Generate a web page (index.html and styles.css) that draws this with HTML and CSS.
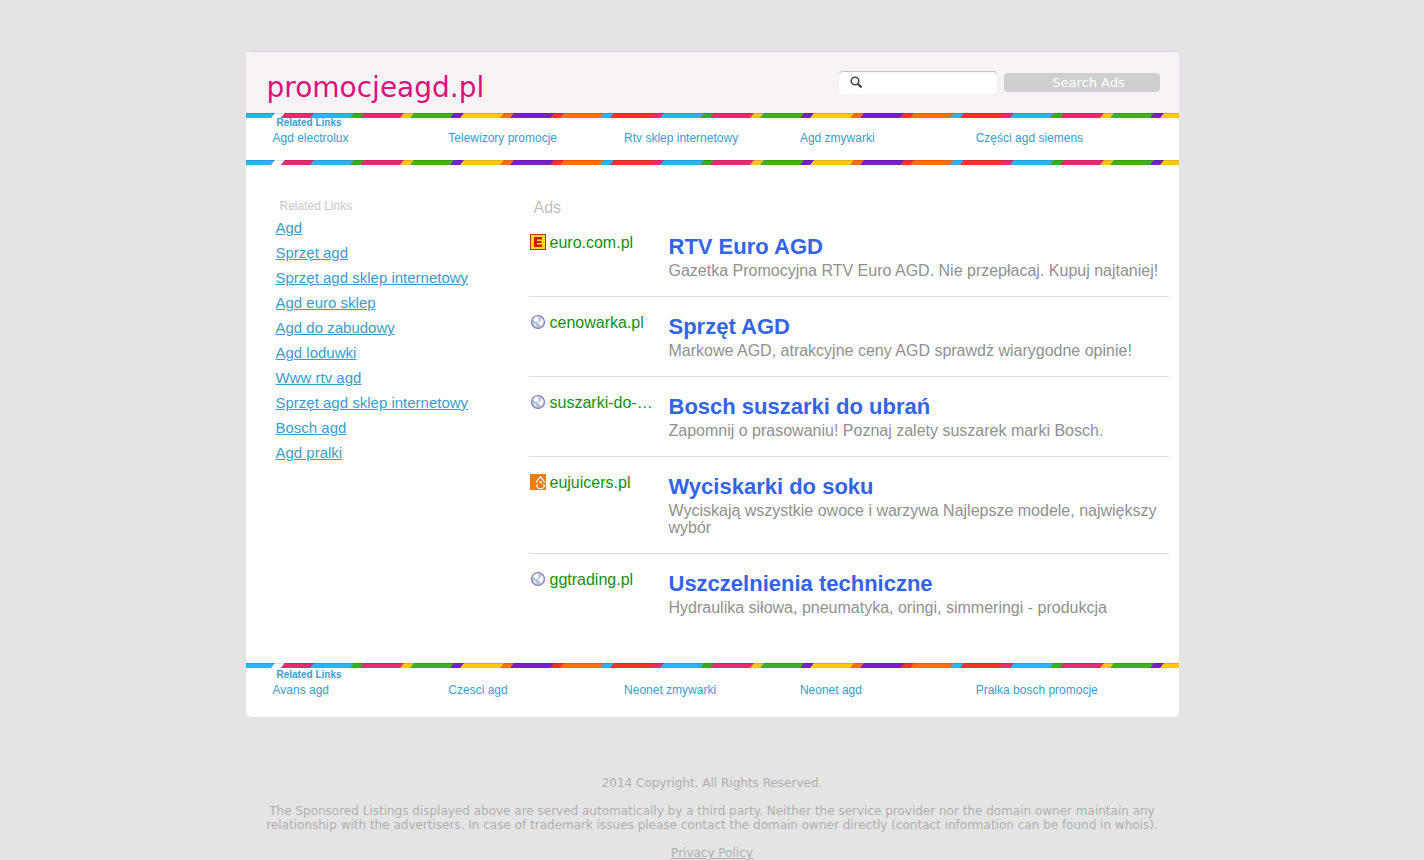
FILE: index.html
```
<!DOCTYPE html>
<html lang="pl">
<head>
  <meta charset="UTF-8">
  <meta name="viewport" content="width=device-width, initial-scale=1.0">
  <title>promocjeagd.pl</title>
  <link rel="stylesheet" href="styles.css">
</head>
<body>
  <!-- shared shapes -->
  <svg class="defs" width="0" height="0" aria-hidden="true">
    <defs>
      <pattern id="bands" x="68" y="0" width="350" height="5" patternUnits="userSpaceOnUse" patternTransform="skewX(-38)">
        <rect width="350" height="5" fill="#2db2fa"/>
        <rect x="40" width="10" height="5" fill="#3aac1c"/>
        <rect x="50" width="40" height="5" fill="#e62c70"/>
        <rect x="90" width="10" height="5" fill="#fdc41a"/>
        <rect x="100" width="40" height="5" fill="#40b01c"/>
        <rect x="140" width="10" height="5" fill="#7620c8"/>
        <rect x="150" width="40" height="5" fill="#fec814"/>
        <rect x="190" width="10" height="5" fill="#fb6e14"/>
        <rect x="200" width="40" height="5" fill="#7620c8"/>
        <rect x="240" width="10" height="5" fill="#f2302e"/>
        <rect x="250" width="40" height="5" fill="#fb6e14"/>
        <rect x="290" width="10" height="5" fill="#2db2fa"/>
        <rect x="300" width="40" height="5" fill="#f2302e"/>
        <rect x="340" width="10" height="5" fill="#e62c70"/>
      </pattern>
      <symbol id="stripe">
        <rect width="100%" height="5" fill="url(#bands)"/>
        <path d="M0 0H29L25 5H0z" fill="#2db2fa"/>
        <path d="M29 0H39L35 5H25z" fill="#fff"/>
        <path d="M39 0H68L64 5H35z" fill="#e62c70"/>
        <rect width="100%" height="1" fill="#000" fill-opacity=".12"/>
      </symbol>
      <symbol id="globe" viewBox="0 0 16 16">
        <circle cx="8" cy="8" r="6.5" fill="#b4bddf" stroke="#7e84b0" stroke-width="1.2"/>
        <path d="M3 5 6 2.500 9 3 8 5 9 6.500 7 8 5.500 8z" fill="#fff"/>
        <path d="M10.500 4 13 5.500 13.500 8.500 12 11.500 10.500 12.500 9.500 10 7.500 9 9 7.500 11 7z" fill="#fff"/>
        <path d="M3 9 5.500 10 7 13 4.500 12z" fill="#e6eaf6"/>
      </symbol>
    </defs>
  </svg>

  <div class="page">
    <header class="header">
      <h1>promocjeagd.pl</h1>
      <form class="search" action="#">
        <div class="search-box">
          <svg width="13" height="13" viewBox="0 0 13 13" aria-hidden="true">
            <circle cx="5" cy="5" r="3.8" fill="none" stroke="#484848" stroke-width="1.6"/>
            <path d="M8 8 11.5 11.5" stroke="#484848" stroke-width="2.4"/>
          </svg>
          <input type="text" name="q" aria-label="Search Ads">
        </div>
        <button type="submit">Search Ads</button>
      </form>
    </header>

    <svg class="stripe" aria-hidden="true"><use href="#stripe"/></svg>
    <nav class="topics">
      <h2>Related Links</h2>
      <ul>
        <li><a href="#">Agd electrolux</a></li>
        <li><a href="#">Telewizory promocje</a></li>
        <li><a href="#">Rtv sklep internetowy</a></li>
        <li><a href="#">Agd zmywarki</a></li>
        <li><a href="#">Części agd siemens</a></li>
      </ul>
    </nav>
    <svg class="stripe" aria-hidden="true"><use href="#stripe"/></svg>

    <main class="content">
      <aside class="related">
        <h2>Related Links</h2>
        <ul>
          <li><a href="#">Agd</a></li>
          <li><a href="#">Sprzęt agd</a></li>
          <li><a href="#">Sprzęt agd sklep internetowy</a></li>
          <li><a href="#">Agd euro sklep</a></li>
          <li><a href="#">Agd do zabudowy</a></li>
          <li><a href="#">Agd loduwki</a></li>
          <li><a href="#">Www rtv agd</a></li>
          <li><a href="#">Sprzęt agd sklep internetowy</a></li>
          <li><a href="#">Bosch agd</a></li>
          <li><a href="#">Agd pralki</a></li>
        </ul>
      </aside>

      <section class="ads">
        <h2>Ads</h2>
        <article class="ad">
          <a class="domain" href="#">
            <svg width="16" height="16" viewBox="0 0 16 16" aria-hidden="true">
              <rect x=".5" y=".5" width="15" height="15" fill="#ffd823" stroke="#b8321c"/>
              <path d="M4 3h8v2.500H7V7h4.500v2H7v1.500h5V13H4z" fill="#d3160c"/>
            </svg>
            <span>euro.com.pl</span>
          </a>
          <div>
            <h3><a href="#">RTV Euro AGD</a></h3>
            <p>Gazetka Promocyjna RTV Euro AGD. Nie przepłacaj. Kupuj najtaniej!</p>
          </div>
        </article>
        <article class="ad">
          <a class="domain" href="#">
            <svg width="16" height="16" aria-hidden="true"><use href="#globe"/></svg>
            <span>cenowarka.pl</span>
          </a>
          <div>
            <h3><a href="#">Sprzęt AGD</a></h3>
            <p>Markowe AGD, atrakcyjne ceny AGD sprawdż wiarygodne opinie!</p>
          </div>
        </article>
        <article class="ad">
          <a class="domain" href="#">
            <svg width="16" height="16" aria-hidden="true"><use href="#globe"/></svg>
            <span>suszarki-do-…</span>
          </a>
          <div>
            <h3><a href="#">Bosch suszarki do ubrań</a></h3>
            <p>Zapomnij o prasowaniu! Poznaj zalety suszarek marki Bosch.</p>
          </div>
        </article>
        <article class="ad">
          <a class="domain" href="#">
            <svg width="16" height="16" viewBox="0 0 16 16" aria-hidden="true">
              <rect width="16" height="16" fill="#ee7d0b"/>
              <path d="M6 8.500 10.500 2.500 15 8.500M9 9 10.500 7.500 12 9M7.500 10 6.500 12 8.500 14.500H12.500L14.500 12 13.500 10" fill="none" stroke="#fff" stroke-width="1.200"/>
            </svg>
            <span>eujuicers.pl</span>
          </a>
          <div>
            <h3><a href="#">Wyciskarki do soku</a></h3>
            <p>Wyciskają wszystkie owoce i warzywa Najlepsze modele, największy wybór</p>
          </div>
        </article>
        <article class="ad">
          <a class="domain" href="#">
            <svg width="16" height="16" aria-hidden="true"><use href="#globe"/></svg>
            <span>ggtrading.pl</span>
          </a>
          <div>
            <h3><a href="#">Uszczelnienia techniczne</a></h3>
            <p>Hydraulika siłowa, pneumatyka, oringi, simmeringi - produkcja</p>
          </div>
        </article>
      </section>
    </main>

    <svg class="stripe" aria-hidden="true"><use href="#stripe"/></svg>
    <nav class="topics topics-bottom">
      <h2>Related Links</h2>
      <ul>
        <li><a href="#">Avans agd</a></li>
        <li><a href="#">Czesci agd</a></li>
        <li><a href="#">Neonet zmywarki</a></li>
        <li><a href="#">Neonet agd</a></li>
        <li><a href="#">Pralka bosch promocje</a></li>
      </ul>
    </nav>
  </div>

  <footer class="footer">
    <p>2014 Copyright. All Rights Reserved.</p>
    <p>The Sponsored Listings displayed above are served automatically by a third party. Neither the service provider nor the domain owner maintain any relationship with the advertisers. In case of trademark issues please contact the domain owner directly (contact information can be found in whois).</p>
    <p><a href="#">Privacy Policy</a></p>
  </footer>
</body>
</html>
```
FILE: styles.css
```
* {
  box-sizing: border-box;
}
body {
  margin: 0;
  padding-top: 51px;
  background-color: #e4e4e4;
  font-family: "Liberation Sans", Arial, sans-serif;
}
h1, h2, h3, p, ul {
  margin: 0;
  padding: 0;
  font-weight: normal;
}
ul {
  list-style: none;
}
a {
  color: #3b9ccc;
}
.defs {
  position: absolute;
}
.page {
  max-width: 933px;
  margin: 0 auto;
  background: #fff;
  border-radius: 5px;
  overflow: hidden;
}
.header {
  display: flex;
  justify-content: space-between;
  align-items: flex-start;
  padding: 19px 19px 9px 21px;
  background: #f7f2f6;
  border-top: 1px solid #d6d4d6;
}
.header h1 {
  font-family: "DejaVu Sans", sans-serif;
  font-size: 28px;
  line-height: 33px;
  color: #dc127c;
}
.search {
  display: flex;
  align-items: center;
  gap: 7px;
}
.search-box {
  display: flex;
  align-items: center;
  width: 158px;
  height: 23px;
  padding: 0 11px;
  background: #fff;
  border-radius: 4px;
  box-shadow: inset 0 1px 1px #bbb;
}
.search-box svg {
  flex: none;
}
.search-box input {
  flex: 1;
  min-width: 0;
  border: 0;
  background: none;
  outline: none;
}
.search button {
  width: 156px;
  height: 19px;
  padding: 0 0 0 14px;
  border: 0;
  border-radius: 4px;
  background: #cfcfcf;
  color: #fff;
  font: 13px/19px "DejaVu Sans", sans-serif;
}
.stripe {
  display: block;
  width: 100%;
  height: 5px;
}
.topics {
  padding: 0 27px 12px;
}
.topics h2 {
  padding-left: 4px;
  font-size: 10px;
  font-weight: bold;
  line-height: 10px;
  color: #3b9ccc;
}
.topics ul {
  display: grid;
  grid-template-columns: repeat(5, 20%);
}
.topics li {
  font-size: 12px;
  line-height: 20px;
}
.topics a {
  text-decoration: none;
}
.topics-bottom {
  padding-top: 2px;
  padding-bottom: 17px;
}
.content {
  display: flex;
  padding: 33px 10px 30px 30px;
}
.related {
  width: 253px;
  flex: none;
}
.related h2 {
  padding-left: 4px;
  font-size: 12px;
  line-height: 17px;
  color: #c8c8c8;
}
.related li {
  font-size: 15px;
  line-height: 25px;
}
.ads {
  flex: 1;
}
.ads h2 {
  padding-left: 5px;
  font-size: 16px;
  line-height: 19px;
  color: #bfbfbf;
}
.ad {
  display: grid;
  grid-template-columns: 140px 1fr;
  padding: 17px 0;
  border-bottom: 1px solid #ddd;
}
.ad:last-child {
  border-bottom: 0;
}
.domain {
  display: flex;
  gap: 4px;
  padding-left: 1px;
  font-size: 16px;
  line-height: 18px;
  color: #109010;
  text-decoration: none;
}
.ad h3 {
  margin-bottom: 2px;
  font-size: 22px;
  font-weight: bold;
  line-height: 26px;
}
.ad h3 a {
  color: #3364e8;
  text-decoration: none;
}
.ad p {
  font-size: 16px;
  line-height: 17px;
  color: #909090;
}
.footer {
  max-width: 933px;
  margin: 59px auto 0;
  font: 12px/14px "DejaVu Sans", sans-serif;
  color: #b0b0b0;
  text-align: center;
}
.footer p {
  margin-bottom: 14px;
}
.footer a {
  color: #b0b0b0;
}
```
